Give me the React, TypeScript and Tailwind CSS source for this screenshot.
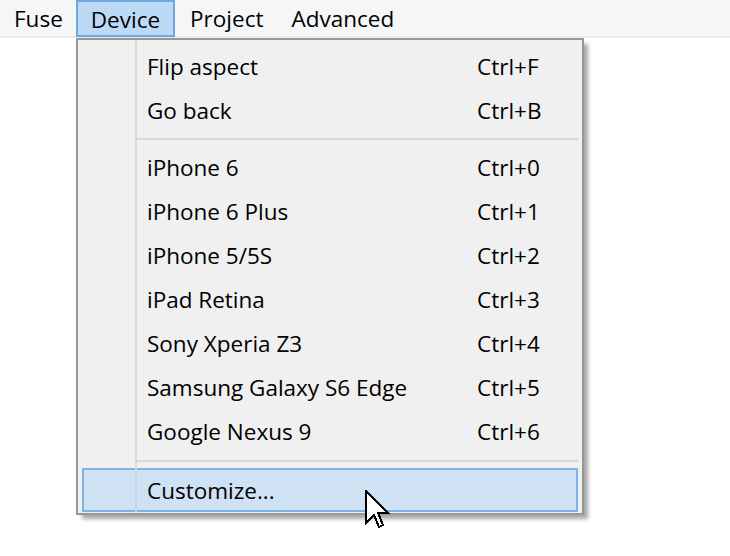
import React from "react";

const items1 = [
  ["Flip aspect", "Ctrl+F"],
  ["Go back", "Ctrl+B"],
];
const items2 = [
  ["iPhone 6", "Ctrl+0"],
  ["iPhone 6 Plus", "Ctrl+1"],
  ["iPhone 5/5S", "Ctrl+2"],
  ["iPad Retina", "Ctrl+3"],
  ["Sony Xperia Z3", "Ctrl+4"],
  ["Samsung Galaxy S6 Edge", "Ctrl+5"],
  ["Google Nexus 9", "Ctrl+6"],
];

function Row({ label, sc, hl }: { label: string; sc?: string; hl?: boolean }) {
  return (
    <div
      className={
        "relative flex h-[44px] items-center pt-[1px] " +
        (hl ? "border-2 border-[#7db3ea] bg-[#cfe2f4]" : "border-2 border-transparent")
      }
    >
      <span
        className="absolute left-[51px] top-[-2px] bottom-[-2px] w-[2px] bg-[#cdd6de]"
        style={{ display: hl ? "block" : "none" }}
      />
      <span className="ml-[63px] w-[330px] shrink-0">{label}</span>
      {sc && <span>{sc}</span>}
    </div>
  );
}

function Sep({ h }: { h: string }) {
  return (
    <div className={"flex items-center pl-[55px] " + h}>
      <div className="h-[2px] w-full bg-[#d9d9d9]" />
    </div>
  );
}

export default function App() {
  return (
    <div
      className="relative h-[556px] w-[730px] overflow-hidden bg-white text-black"
      style={{ fontFamily: '"Open Sans", "Noto Sans", sans-serif' }}
    >
      <div className="flex h-[38px] border-b-2 border-[#ececec] bg-[#f5f6f7] text-[22.5px]">
        <div className="flex h-[36px] items-center pl-[14px] pr-[13px] pt-[2px]">Fuse</div>
        <div className="z-10 flex h-[37px] items-center border-2 border-[#6ea7e2] bg-[#bcd9f6] px-[13px] pt-[2px]">
          Device
        </div>
        <div className="flex h-[36px] items-center pl-[15px] pr-[14px] pt-[2px]">Project</div>
        <div className="flex h-[36px] items-center px-[14px] pt-[2px]">Advanced</div>
      </div>

      <div className="absolute left-[76px] top-[38px] w-[508px] border-2 border-[#979797] bg-[#f0f0f0] pb-[1px] pt-[4px] text-[22.5px] shadow-[5px_5px_4px_-1px_rgba(0,0,0,0.35)]">
        <div className="absolute bottom-0 left-[57px] top-0 w-[2px] bg-[#d9d9d9]" />
        <div className="relative px-[4px]">
          {items1.map(([l, s]) => (
            <Row key={l} label={l} sc={s} />
          ))}
          <Sep h="h-[13px]" />
          {items2.map(([l, s]) => (
            <Row key={l} label={l} sc={s} />
          ))}
          <Sep h="h-[15px]" />
          <Row label="Customize..." hl />
        </div>
      </div>

      <svg
        className="absolute left-[365px] top-[490px]"
        width="26"
        height="42"
        viewBox="0 0 13 21"
        shapeRendering="crispEdges"
      >
        <path
          d="M0.5 0.5 L0.5 16.5 L4.5 12.5 L7 18.5 L9 17.5 L6.5 11.5 L11.5 11.5 Z"
          fill="#fff"
          stroke="#000"
          strokeWidth="1"
          strokeLinejoin="miter"
        />
      </svg>
    </div>
  );
}
